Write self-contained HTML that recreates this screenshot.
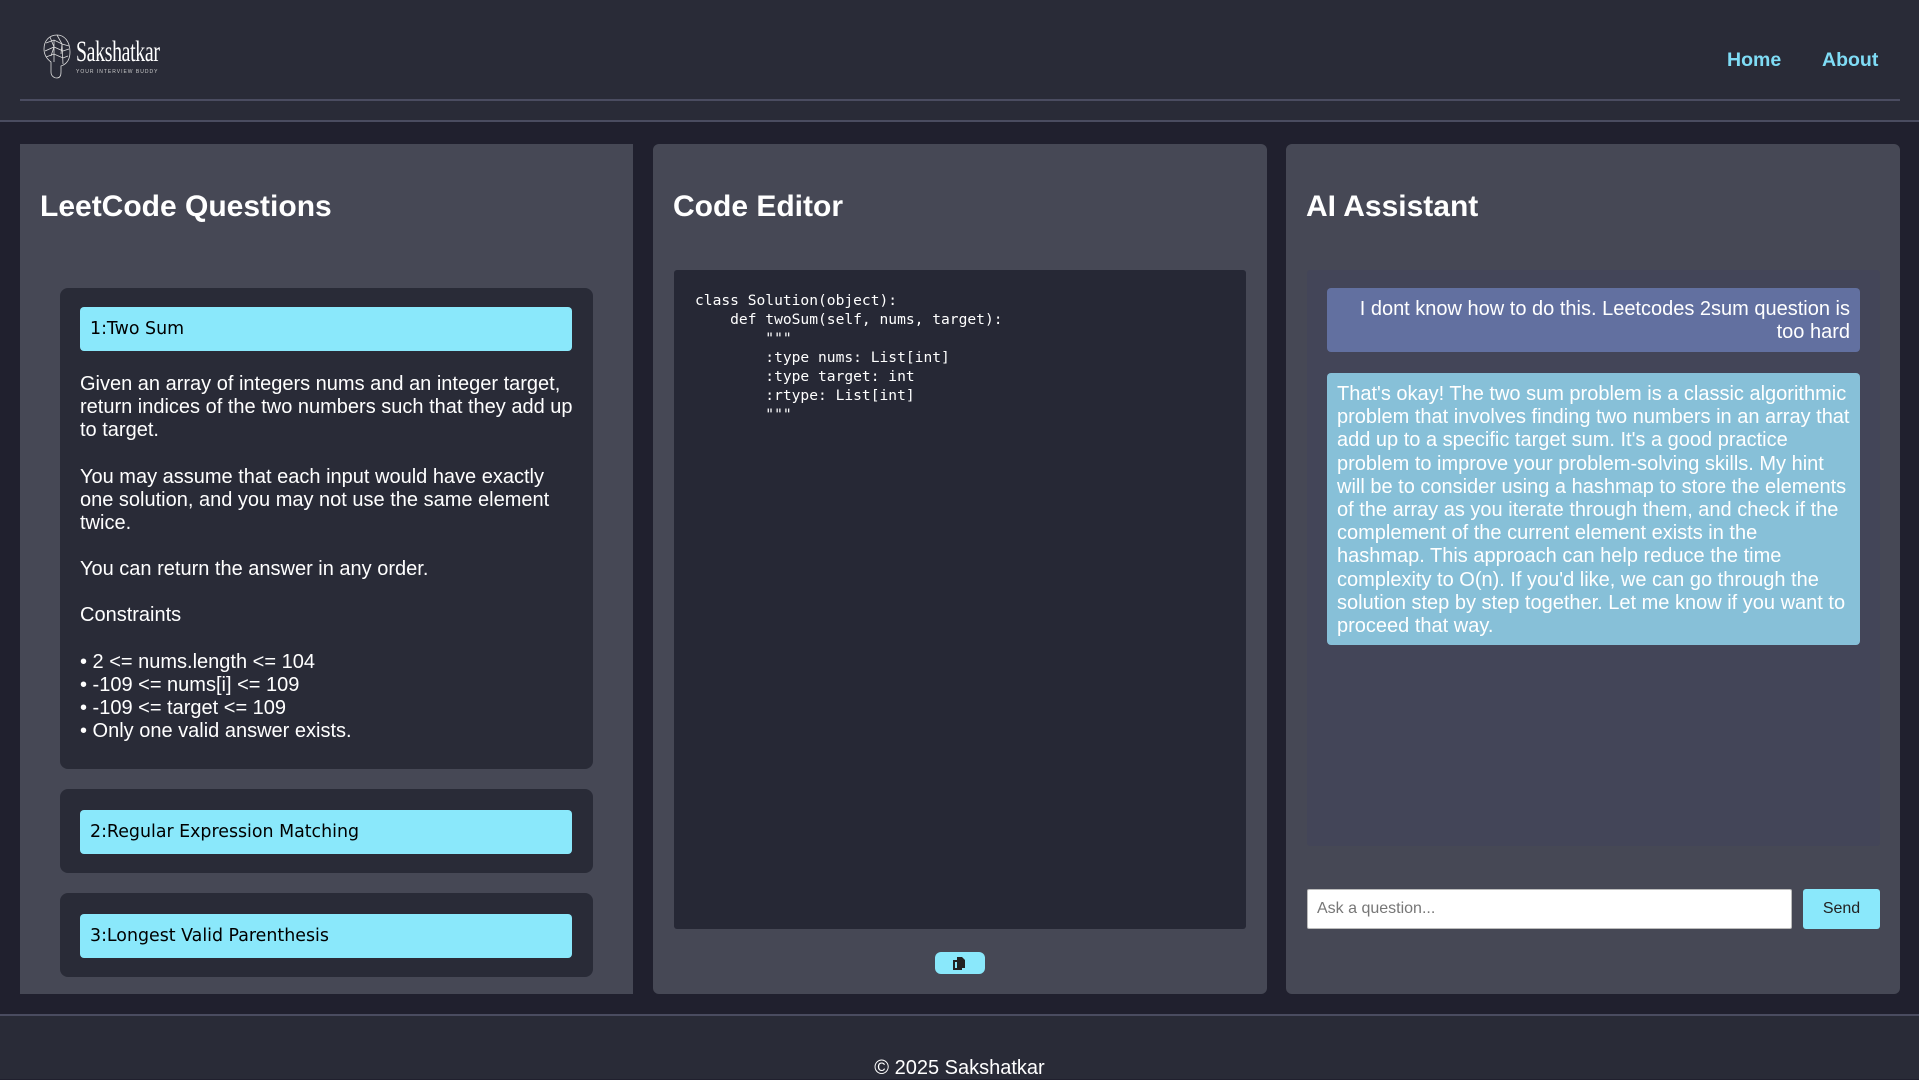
<!DOCTYPE html>
<html><head><meta charset="utf-8"><style>
*{margin:0;padding:0;box-sizing:border-box}
body{width:1919px;height:1079px;background:#20202e;font-family:"Liberation Sans",Arial,sans-serif;color:#fff;position:relative;overflow:hidden}
.hdr{position:absolute;left:0;top:0;width:1919px;height:122px;background:#292b37;border-bottom:2px solid #4a4c60}
.hline{position:absolute;left:20px;top:99px;width:1880px;height:2px;background:#4a4c60}
.logo{position:absolute;left:43px;top:33px}
.brand{position:absolute;left:76px;top:35px;font-family:"Liberation Serif",serif;font-size:30px;transform:scaleX(.66);transform-origin:left;letter-spacing:-.5px}
.tag{position:absolute;left:76px;top:69px;font-size:5px;letter-spacing:1px;color:#ccc}
.nav{position:absolute;top:49px;font-weight:bold;font-size:19.5px;color:#7fdcf5}
.panel{position:absolute;top:144px;width:614px;height:850px;background:#464855}
.ptitle{position:absolute;left:20px;top:46px;font-size:30px;font-weight:bold}
.card{position:absolute;left:40px;width:533px;background:#292b37;border-radius:8px}
.bar{position:absolute;left:20px;width:492px;height:44px;background:#8ae8fb;border-radius:4px;color:#000;font-family:"DejaVu Sans","Liberation Sans",sans-serif;font-size:17.4px;line-height:44px;padding-left:10px}
.qtext{position:absolute;left:20px;top:85px;width:494px;font-size:20px;line-height:23.2px}
.qtext p{margin-bottom:23px}
.code{position:absolute;left:21px;top:126px;width:572px;height:659px;background:#262835;border-radius:3px;font-family:"DejaVu Sans Mono",monospace;font-size:14.6px;line-height:19px;padding:21px 0 0 21px;white-space:pre;color:#fff}
.copy{position:absolute;left:282px;top:808px;width:50px;height:22px;background:#8ae8fb;border-radius:6px}
.chat{position:absolute;left:21px;top:126px;width:573px;height:576px;background:#434558;border-radius:3px}
.ub{position:absolute;left:20px;top:18px;width:533px;height:64px;background:#6270a0;border-radius:4px;text-align:right;font-size:20px;line-height:23.2px;padding:10px 10px 0 10px}
.ab{position:absolute;left:20px;top:103px;width:533px;height:272px;background:#87c0d8;border-radius:4px;font-size:20px;line-height:23.2px;padding:10px 10px 0 10px}
.inp{position:absolute;left:21px;top:745px;width:485px;height:40px;background:#fff;border:1px solid #bbb;border-radius:2px;color:#777;font-size:16px;line-height:38px;padding-left:9px}
.send{position:absolute;left:517px;top:745px;width:77px;height:40px;background:#8ae8fb;border-radius:3px;color:#222;font-size:16px;line-height:40px;text-align:center}
.foot{position:absolute;left:0;top:1014px;width:1919px;height:65px;background:#292b37;border-top:2px solid #4a4c60;text-align:center;font-size:20px;padding-top:41px}
</style></head><body>
<div class="hdr"><div class="hline"></div>
<svg class="logo" width="28" height="46" viewBox="0 0 28 46" fill="none" stroke="#ddd" stroke-width="0.8"><path d="M14 2C6 2 1 8 1 16c0 6 3 10 7 13v10c0 4 3 6 6 6 3 0 4-3 4-6v-6c6-2 9-7 9-14C27 8 21 2 14 2z"/><path d="M3 10l8-3 8 4 7 2M2 18l9-4 9 4 6-2M3 24l8-3 9 4 5-2M11 7l0 22M19 11l1 20M7 4l4 10 -3 9M14 2l5 9-1 10"/></svg>
<div class="brand">Sakshatkar</div><div class="tag">YOUR INTERVIEW BUDDY</div>
<div class="nav" style="left:1727px">Home</div><div class="nav" style="left:1822px">About</div>
</div>
<div class="panel" style="left:20px;width:613px">
<div class="ptitle">LeetCode Questions</div>
<div class="card" style="top:144px;height:481px">
<div class="bar" style="top:19px">1:Two Sum</div>
<div class="qtext"><p>Given an array of integers nums and an integer target, return indices of the two numbers such that they add up to target.</p><p>You may assume that each input would have exactly one solution, and you may not use the same element twice.</p><p>You can return the answer in any order.</p><p>Constraints</p><div>• 2 &lt;= nums.length &lt;= 104<br>• -109 &lt;= nums[i] &lt;= 109<br>• -109 &lt;= target &lt;= 109<br>• Only one valid answer exists.</div></div>
</div>
<div class="card" style="top:645px;height:84px"><div class="bar" style="top:21px">2:Regular Expression Matching</div></div>
<div class="card" style="top:749px;height:84px"><div class="bar" style="top:21px">3:Longest Valid Parenthesis</div></div>
</div>
<div class="panel" style="left:653px;border-radius:6px">
<div class="ptitle">Code Editor</div>
<div class="code">class Solution(object):
    def twoSum(self, nums, target):
        """
        :type nums: List[int]
        :type target: int
        :rtype: List[int]
        """</div>
<div class="copy"><svg width="50" height="22" viewBox="0 0 50 22"><rect x="19" y="9" width="7" height="8" fill="none" stroke="#222" stroke-width="2"/><path d="M22 5h5l3 3v8h-8z" fill="#222"/></svg></div>
</div>
<div class="panel" style="left:1286px;border-radius:6px">
<div class="ptitle">AI Assistant</div>
<div class="chat">
<div class="ub">I dont know how to do this. Leetcodes 2sum question is too hard</div>
<div class="ab">That's okay! The two sum problem is a classic algorithmic problem that involves finding two numbers in an array that add up to a specific target sum. It's a good practice problem to improve your problem-solving skills. My hint will be to consider using a hashmap to store the elements of the array as you iterate through them, and check if the complement of the current element exists in the hashmap. This approach can help reduce the time complexity to O(n). If you'd like, we can go through the solution step by step together. Let me know if you want to proceed that way.</div>
</div>
<div class="inp">Ask a question...</div><div class="send">Send</div>
</div>
<div class="foot">© 2025 Sakshatkar</div>
</body></html>
